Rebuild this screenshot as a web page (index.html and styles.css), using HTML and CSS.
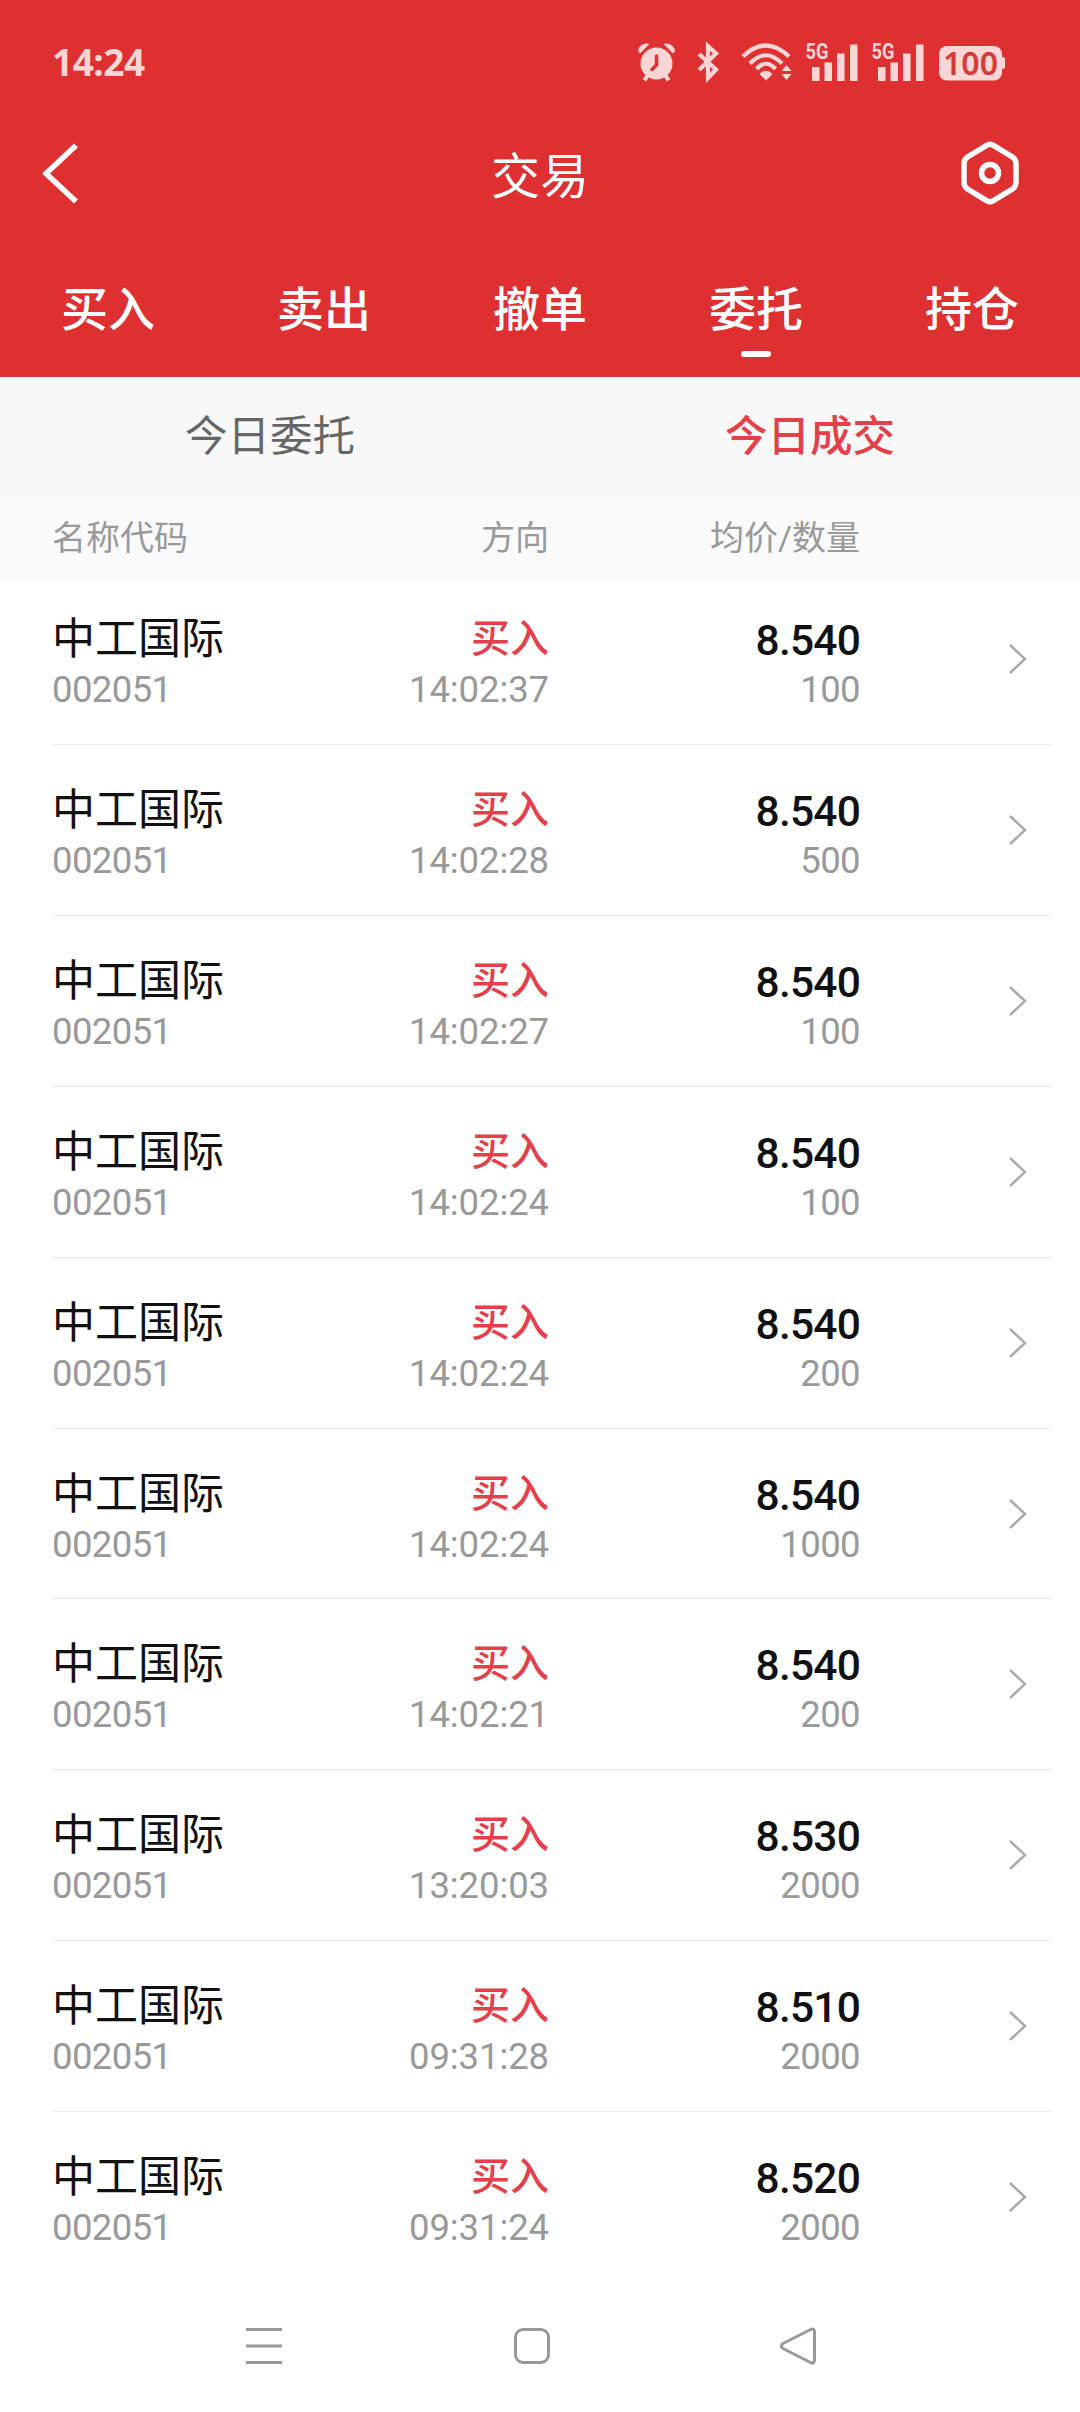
FILE: index.html
```html
<!doctype html>
<html lang="zh-CN">
<head>
<meta charset="utf-8">
<title>交易</title>
<link rel="stylesheet" href="styles.css">
</head>
<body>

<header class="top">
    <div class="status">
        <span class="clock">14:24</span>
        <div class="status-icons">
            <svg class="alarm" width="38" height="38" viewBox="0 0 38 38">
                <circle cx="18.500" cy="20.500" r="16"/>
                <path d="M.5 9.500Q-.5 5 3 2.500 6.500-.5 11.500 1L2.500 10Z M36.500 9.500Q37.500 5 34 2.500 30.500-.5 25.500 1L34.500 10Z"/>
                <path d="M9 33l-2.500 4.500M28 33l2.500 4.500" class="line"/>
                <path d="M18.500 13v9l-4.500 4.500" class="cut"/>
            </svg>
            <svg class="bluetooth" width="22" height="38" viewBox="0 0 22 38">
                <path d="M2 11L19 26.500 11 35V3l8 7.500L2 27" class="line"/>
            </svg>
            <svg class="wifi" width="52" height="38" viewBox="0 0 52 38">
                <path d="M2 13.500Q25 -8.500 48 13.500M9 20.500Q25 4 41 20.500M15.500 26Q25 15.500 34.500 26" class="line"/>
                <path d="M18.500 31Q25 24.500 31.500 31L25 37.500Z M40.500 28l5-6 5 6Z M40.500 31l5 6 5-6Z"/>
            </svg>
            <svg class="signal" width="52" height="38" viewBox="0 0 52 38">
                <text x="-.5" y="16" textLength="23" lengthAdjust="spacingAndGlyphs">5G</text>
                <path d="M6 24h7.500v14H6Z M18.500 19.500H26V38h-7.500Z M31 10.500h7.500V38H31Z M44 1.500h7.500V38H44Z"/>
            </svg>
            <svg class="signal" width="52" height="38" viewBox="0 0 52 38">
                <text x="-.5" y="16" textLength="23" lengthAdjust="spacingAndGlyphs">5G</text>
                <path d="M6 24h7.500v14H6Z M18.500 19.500H26V38h-7.500Z M31 10.500h7.500V38H31Z M44 1.500h7.500V38H44Z"/>
            </svg>
            <svg class="battery" width="67" height="38" viewBox="0 0 67 38">
                <rect x="0" y="3" width="63" height="34.500" rx="8"/>
                <path d="M62 14h2q2 0 2 2v8q0 2-2 2h-2Z"/>
                <text x="4" y="31.500" textLength="55" lengthAdjust="spacingAndGlyphs">100</text>
            </svg>
        </div>
    </div>
    <div class="bar">
        <svg class="back" width="40" height="64" viewBox="0 0 40 64">
            <path d="M37 4.500L7 32.500l30 28"/>
        </svg>
        <h1>交易</h1>
        <svg class="setting" width="60" height="64" viewBox="0 0 60 64">
            <path d="M27 4.200q3-2 6 0L52.500 16q3.500 2.500 3.500 6.500v19q0 4-3.500 6.500L33 59.800q-3 2-6 0L7.500 48Q4 45.500 4 41.500v-19q0-4 3.500-6.500Z"/>
            <circle cx="30" cy="32" r="8.500"/>
        </svg>
    </div>
    <nav class="tabs">
        <a>买入</a>
        <a>卖出</a>
        <a>撤单</a>
        <a class="on">委托</a>
        <a>持仓</a>
    </nav>
</header>

<div class="subtabs">
    <a>今日委托</a>
    <a class="on">今日成交</a>
</div>

<div class="row head">
    <span>名称代码</span>
    <span>方向</span>
    <span>均价/数量</span>
</div>
<div id="list" class="list"></div>

<footer class="keys">
    <svg width="36" height="38" viewBox="0 0 36 38"><path d="M0 2.500h36M0 19h36M0 35.500h36"/></svg>
    <svg width="38" height="38" viewBox="0 0 38 38"><rect x="2.500" y="2.500" width="33" height="33" rx="7.500"/></svg>
    <svg width="38" height="38" viewBox="0 0 38 38"><path d="M31.500 2.500Q35.500 1 35.500 5v28q0 4-4 2.500L4 21.500q-3.500-2.500 0-5Z"/></svg>
</footer>

<script>
const deals=[
    ['14:02:37','8.540',100],
    ['14:02:28','8.540',500],
    ['14:02:27','8.540',100],
    ['14:02:24','8.540',100],
    ['14:02:24','8.540',200],
    ['14:02:24','8.540',1000],
    ['14:02:21','8.540',200],
    ['13:20:03','8.530',2000],
    ['09:31:28','8.510',2000],
    ['09:31:24','8.520',2000]
];
const list=document.getElementById('list');
for(let [time,price,count] of deals){
    let row=document.createElement('div');
    row.className='row deal';
    row.innerHTML=`
        <div><div class="name">中工国际</div><div class="num">002051</div></div>
        <div><div class="side">买入</div><div class="num time">${time}</div></div>
        <div><div class="price">${price}</div><div class="num">${count}</div></div>
        <svg class="more" width="20" height="34" viewBox="0 0 20 34"><path d="M2 3l15 14L2 31"/></svg>`;
    list.appendChild(row);
}
</script>
</body>
</html>
```

FILE: styles.css
```css
*{
    box-sizing: border-box;
}
html,body{
    height: 100%;
    margin: 0;
}
body{
    display: flex;
    flex-direction: column;
    background-color: #fff;
    color: #111;
    font-family: Roboto,"Noto Sans CJK SC",sans-serif;
    overflow: hidden;
}
svg{
    display: block;
    fill: none;
    overflow: visible;
}
.top{
    height: 377px;
    flex: none;
    background-color: #de3031;
    color: #fff;
}

/* 状态栏 */
.status{
    height: 124px;
    display: flex;
    justify-content: space-between;
    align-items: center;
    padding: 0 74px 0 52px;
    color: #fcd5d5;
}
.clock{
    padding-bottom: 2px;
    font: 700 37px/1 "Noto Sans",sans-serif;
    letter-spacing: -.5px;
}
.status-icons{
    display: flex;
}
.status-icons svg{
    fill: #fcd5d5;
}
.status-icons .line{
    fill: none;
    stroke: #fcd5d5;
    stroke-width: 4.2;
}
.status-icons .cut{
    fill: none;
    stroke: #de3031;
    stroke-width: 3.5;
    stroke-linecap: round;
}
.bluetooth{
    margin-left: 21px;
}
.wifi{
    margin-left: 22px;
}
.signal{
    margin-left: 13px;
}
.signal+.signal{
    margin-left: 14px;
}
.signal text{
    font: 700 22px Roboto,sans-serif;
}
.battery{
    margin-left: 15px;
}
.battery text{
    fill: #d43a3a;
    font: 600 32px "Noto Sans",sans-serif;
}

/* 标题 */
.bar{
    height: 98px;
    display: grid;
    grid-template-columns: 1fr auto 1fr;
    align-items: center;
    padding: 0 60px 0 39px;
}
.bar svg{
    stroke: #fff;
    stroke-width: 5.5;
}
.setting{
    justify-self: end;
}
.bar h1{
    margin: 0;
    padding: 0 0 1px 21px;
    font-size: 49px;
    font-weight: 400;
}
.tabs{
    display: flex;
    font-size: 47px;
    font-weight: 500;
}
.tabs a{
    flex: 1;
    height: 155px;
    padding-top: 53px;
    line-height: 70px;
    text-align: center;
}
.tabs .on::after{
    content: '';
    display: block;
    width: 30px;
    height: 6px;
    margin: 6px auto 0;
    border-radius: 3px;
    background-color: #fff;
}

.subtabs{
    height: 118px;
    flex: none;
    display: flex;
    background-color: #f8f8f8;
    color: #666;
    font-size: 42.5px;
    line-height: 119px;
}
.subtabs a{
    flex: 1;
    text-align: center;
}
.subtabs .on{
    color: #e3404a;
    font-weight: 500;
}

/* 成交列表 */
.row{
    display: grid;
    grid-template-columns: 248px 249px 311px 1fr;
    margin: 0 28px 0 52px;
}
.row>:nth-child(2),.row>:nth-child(3){
    text-align: right;
}
.row.head{
    height: 86px;
    flex: none;
    margin: 0;
    padding: 0 28px 0 52px;
    background-color: #fafafa;
    color: #999;
    font-size: 34px;
    line-height: 86px;
}
.list{
    flex: 1;
}
.deal{
    height: 170.9px;
    padding-top: 37px;
    border-bottom: 1px solid #ebebeb;
}
.deal:first-child{
    height: 164px;
    padding-top: 30px;
}
.deal:last-child{
    border-bottom: 0;
}
.name,.side,.price{
    height: 56px;
}
.name{
    font-size: 43px;
    line-height: 57px;
}
.side{
    color: #e3404a;
    font-size: 39px;
    font-weight: 500;
    line-height: 57px;
}
.price{
    font-size: 42.5px;
    font-weight: 500;
    letter-spacing: -.8px;
    line-height: 60px;
}
.num{
    color: #999;
    font-size: 36.5px;
    font-weight: 450;
    line-height: 45px;
    letter-spacing: -.6px;
}
.time{
    letter-spacing: -.1px;
}
.more{
    margin: 31px 0 0 148px;
    stroke: #aaa;
    stroke-width: 2.5;
}

.keys{
    height: 132px;
    flex: none;
    display: flex;
    justify-content: space-between;
    align-items: center;
    padding: 0 263px 6px 246px;
}
.keys svg{
    stroke: #999;
    stroke-width: 3;
}
.keys svg:nth-child(2){
    margin-left: 2px;
}
```
